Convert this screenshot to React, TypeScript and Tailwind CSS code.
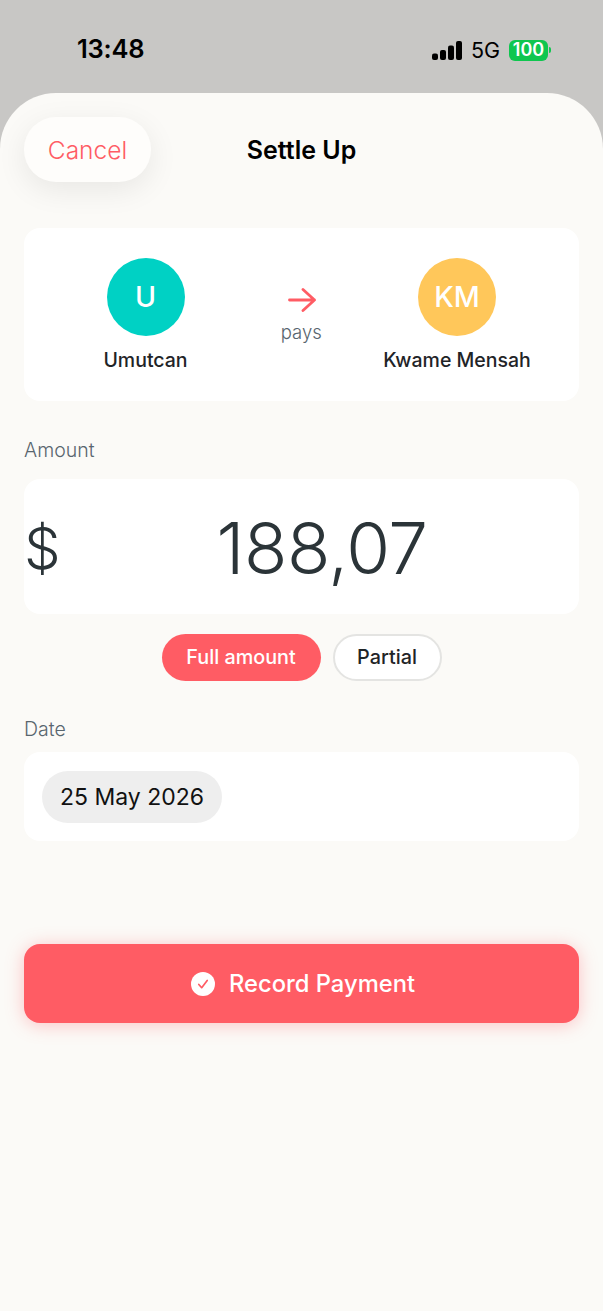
function StatusBar() {
  return (
    <div className="flex h-[93px] items-start justify-between bg-[#c8c7c5] pl-[77px] pr-[52px] pt-[35px]">
      <span className="text-[25.5px] font-semibold leading-[28px] tracking-[-0.2px] text-black">13:48</span>
      <div className="flex items-center pt-[3px]">
        <svg width="30" height="19" viewBox="0 0 30 19" fill="#000">
          <rect x="0" y="12.5" width="6" height="6.5" rx="2" />
          <rect x="8" y="9" width="6" height="10" rx="2" />
          <rect x="16" y="4.5" width="6" height="14.5" rx="2" />
          <rect x="24" y="0" width="6" height="19" rx="2" />
        </svg>
        <span className="ml-[9px] text-[21.5px] font-normal leading-[24px] text-black">5G</span>
        <div className="ml-[9px] flex h-[21px] w-[39px] items-center justify-center rounded-[6px] bg-[#0fc64f] text-[18px] font-semibold leading-none text-white">
          100
        </div>
        <div className="ml-[1px] h-[6px] w-[2px] rounded-r-full bg-[#0fc64f]" />
      </div>
    </div>
  );
}

function Person({ initials, name, color }: { initials: string; name: string; color: string }) {
  return (
    <div className="flex w-[147px] flex-col items-center">
      <div className={`flex h-[78px] w-[78px] items-center justify-center rounded-full text-[28.5px] font-medium text-white ${color}`}>
        {initials}
      </div>
      <p className="mt-[12px] whitespace-nowrap text-[19.5px] font-medium leading-[24px] text-[#1f2427]">{name}</p>
    </div>
  );
}

export default function App() {
  return (
    <div className="h-[1311px] w-[603px] overflow-hidden bg-[#c8c7c5] font-['Inter',sans-serif]">
      <StatusBar />
      <div className="h-[1218px] rounded-t-[56px] bg-[#fbfaf7] px-[24px] pt-[24px]">
        <div className="flex items-center justify-between">
          <button className="h-[65px] w-[127px] rounded-[32px] bg-[#fefdfb] pt-[2px] text-[24.5px] font-light text-[#ff5c64] shadow-[0_8px_30px_rgba(0,0,0,0.08)]">
            Cancel
          </button>
          <h1 className="text-[25px] font-semibold leading-[30px] text-black">Settle Up</h1>
          <div className="w-[127px]" />
        </div>

        <div className="mt-[46px] flex h-[173px] justify-between rounded-[16px] bg-white pl-[48px] pr-[48.5px] pt-[30px]">
          <Person initials="U" name="Umutcan" color="bg-[#00d1c4]" />
          <div className="flex flex-col items-center pt-[30px]">
            <svg className="ml-[1px]" width="28" height="24" viewBox="0 0 28 24" fill="none" stroke="#ff5c64" strokeWidth="2.8" strokeLinecap="round" strokeLinejoin="round">
              <path d="M1.5 12H26.5M15 1.5L26.5 12L15 22.5" />
            </svg>
            <span className="mt-[8px] text-[18.5px] font-light leading-[24px] text-[#58656e]">pays</span>
          </div>
          <Person initials="KM" name="Kwame Mensah" color="bg-[#ffc75a]" />
        </div>

        <p className="mt-[37px] text-[19.5px] font-light leading-[24px] text-[#58656e]">Amount</p>
        <div className="mt-[17px] flex h-[135px] items-center rounded-[16px] bg-white pt-[2px]">
          <span className="w-[41px] text-[58px] font-light leading-[76px] text-[#2b3438]">$</span>
          <span className="flex-1 text-center text-[71px] font-light leading-[86px] tracking-[-0.4px] text-[#2b3438]">188,07</span>
        </div>

        <div className="mt-[20px] flex justify-center gap-[12px]">
          <button className="h-[47px] w-[159px] rounded-full bg-[#ff5c64] text-[19.8px] font-medium text-white">
            Full amount
          </button>
          <button className="h-[47px] w-[109px] rounded-full border-2 border-[#e4e4e2] bg-white text-[19.8px] font-medium text-[#1f2427]">
            Partial
          </button>
        </div>

        <p className="mt-[36px] text-[19.5px] font-light leading-[24px] text-[#58656e]">Date</p>
        <div className="mt-[11px] flex h-[89px] items-center rounded-[16px] bg-white px-[18px]">
          <div className="flex h-[52px] w-[180px] items-center justify-center rounded-full bg-[#eeeeee] pt-[1px] text-[23px] font-normal text-[#111]">
            25 May 2026
          </div>
        </div>

        <button className="mt-[103px] flex h-[79px] w-full items-center justify-center gap-[14px] rounded-[16px] bg-[#ff5c64] pl-[3px] text-[23.75px] font-medium text-white shadow-[0_2px_18px_rgba(255,92,100,0.35)]">
          <svg width="24" height="24" viewBox="0 0 24 24">
            <circle cx="12" cy="12" r="12" fill="#fff" />
            <path d="M7.8 12.5l2.9 3.2L16.2 8.4" fill="none" stroke="#ff5c64" strokeWidth="1.7" strokeLinecap="round" strokeLinejoin="round" />
          </svg>
          Record Payment
        </button>
      </div>
    </div>
  );
}
